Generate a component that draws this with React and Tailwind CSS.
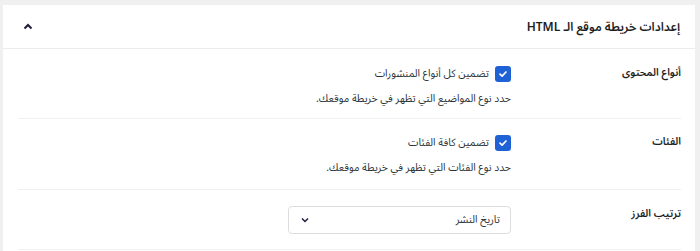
import React from "react";

function Check({ label }) {
  return (
    <label className="flex items-center gap-[6px] h-[20px]">
      <span className="w-[16px] h-[16px] rounded-[3px] bg-[#1f62d6] flex items-center justify-center">
        <svg width="10" height="10" viewBox="0 0 10 10" fill="none">
          <path d="M2 5.2 L4.1 7.2 L8 3" stroke="white" strokeWidth="1.7" strokeLinecap="round" strokeLinejoin="round" />
        </svg>
      </span>
      <span className="text-[10.5px] leading-[20px] text-[#2c3338]">{label}</span>
    </label>
  );
}

export default function App() {
  return (
    <div
      dir="rtl"
      className="w-[700px] h-[251px] bg-[#f0f0f1] pt-[5px] pl-[3px] pr-[5px] overflow-hidden font-['Noto_Sans_Arabic','DejaVu_Sans',sans-serif]"
    >
      <div className="bg-white h-full">
        <div className="h-[44px] flex items-center justify-between pr-[15px] pl-[20px] border-b border-[#ececec]">
          <h2 className="text-[12px] leading-[20px] font-semibold text-[#1e1e1e] mt-[2px]">إعدادات خريطة موقع الـ HTML</h2>
          <svg width="10" height="8" viewBox="0 0 10 8" fill="none">
            <path d="M1.5 5.5 L5 2 L8.5 5.5" stroke="#1e1e3c" strokeWidth="2" />
          </svg>
        </div>
        <div className="pr-[14px] pl-[15px]">
          <div className="flex pt-[15px] pb-[9px] border-b border-[#f0f0f1]">
            <div className="w-[170px] shrink-0 h-[20px] flex items-center text-[10.5px] font-semibold text-[#1e1e1e]">أنواع المحتوى</div>
            <div className="flex flex-col gap-[5px]">
              <Check label="تضمين كل أنواع المنشورات" />
              <p className="text-[10.5px] leading-[20px] text-[#2c3338]">حدد نوع المواضيع التي تظهر في خريطة موقعك.</p>
            </div>
          </div>
          <div className="flex pt-[14px] pb-[11px] border-b border-[#f0f0f1]">
            <div className="w-[170px] shrink-0 h-[20px] flex items-center text-[10.5px] font-semibold text-[#1e1e1e]">الفئات</div>
            <div className="flex flex-col gap-[5px]">
              <Check label="تضمين كافة الفئات" />
              <p className="text-[10.5px] leading-[20px] text-[#2c3338]">حدد نوع الفئات التي تظهر في خريطة موقعك.</p>
            </div>
          </div>
          <div className="flex items-start pt-[16px] pb-[15px] border-b border-[#f0f0f1]">
            <div className="w-[170px] shrink-0 h-[20px] mt-[-1px] flex items-center text-[10.5px] font-semibold text-[#1e1e1e]">ترتيب الفرز</div>
            <div className="w-[223px] h-[28px] border border-[#dcdcde] rounded-[4px] flex items-center justify-between pr-[10px] pl-[12px]">
              <span className="text-[10.5px] leading-[20px] text-[#2c3338]">تاريخ النشر</span>
              <svg width="8" height="6" viewBox="0 0 8 6" fill="none">
                <path d="M1 1.5 L4 4.5 L7 1.5" stroke="#1e1e3c" strokeWidth="1.5" />
              </svg>
            </div>
          </div>
        </div>
      </div>
    </div>
  );
}
